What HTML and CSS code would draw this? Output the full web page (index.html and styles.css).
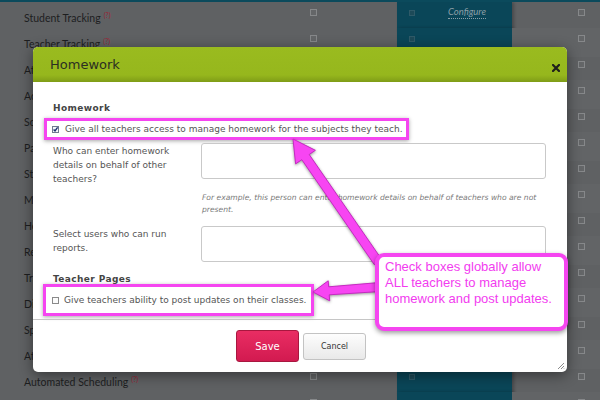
FILE: index.html
```html
<!DOCTYPE html>
<html>
<head>
<meta charset="utf-8">
<link rel="stylesheet" href="styles.css">
</head>
<body>
<div class="topbar"></div>
<div class="table">
  <div class="row"><div class="lab">Student Tracking<sup>(?)</sup></div><div class="c1"><span class="cb"></span></div><div class="teal"><span class="cb on"></span><span class="configure">Configure</span></div><div class="c3"><span class="cb"></span></div></div>
  <div class="row"><div class="lab">Teacher Tracking<sup>(?)</sup></div><div class="c1"><span class="cb"></span></div><div class="teal"><span class="cb on"></span></div><div class="c3"><span class="cb"></span></div></div>
  <div class="row"><div class="lab">Attendance<sup>(?)</sup></div><div class="c1"><span class="cb"></span></div><div class="teal"><span class="cb on"></span></div><div class="c3"><span class="cb"></span></div></div>
  <div class="row"><div class="lab">Academics<sup>(?)</sup></div><div class="c1"><span class="cb"></span></div><div class="teal"><span class="cb on"></span></div><div class="c3"><span class="cb"></span></div></div>
  <div class="row"><div class="lab">Schedules<sup>(?)</sup></div><div class="c1"><span class="cb"></span></div><div class="teal"><span class="cb on"></span></div><div class="c3"><span class="cb"></span></div></div>
  <div class="row"><div class="lab">Parent Portal<sup>(?)</sup></div><div class="c1"><span class="cb"></span></div><div class="teal"><span class="cb on"></span></div><div class="c3"><span class="cb"></span></div></div>
  <div class="row"><div class="lab">Student Portal<sup>(?)</sup></div><div class="c1"><span class="cb"></span></div><div class="teal"><span class="cb on"></span></div><div class="c3"><span class="cb"></span></div></div>
  <div class="row"><div class="lab">Messaging<sup>(?)</sup></div><div class="c1"><span class="cb"></span></div><div class="teal"><span class="cb on"></span></div><div class="c3"><span class="cb"></span></div></div>
  <div class="row"><div class="lab">Health Records<sup>(?)</sup></div><div class="c1"><span class="cb"></span></div><div class="teal"><span class="cb on"></span></div><div class="c3"><span class="cb"></span></div></div>
  <div class="row"><div class="lab">Report Cards<sup>(?)</sup></div><div class="c1"><span class="cb"></span></div><div class="teal"><span class="cb on"></span></div><div class="c3"><span class="cb"></span></div></div>
  <div class="row"><div class="lab">Transcripts<sup>(?)</sup></div><div class="c1"><span class="cb"></span></div><div class="teal"><span class="cb on"></span></div><div class="c3"><span class="cb"></span></div></div>
  <div class="row"><div class="lab">Discipline<sup>(?)</sup></div><div class="c1"><span class="cb"></span></div><div class="teal"><span class="cb on"></span></div><div class="c3"><span class="cb"></span></div></div>
  <div class="row"><div class="lab">Special Education<sup>(?)</sup></div><div class="c1"><span class="cb"></span></div><div class="teal"><span class="cb on"></span></div><div class="c3"><span class="cb"></span></div></div>
  <div class="row"><div class="lab">Athletics<sup>(?)</sup></div><div class="c1"><span class="cb"></span></div><div class="teal"><span class="cb on"></span></div><div class="c3"><span class="cb"></span></div></div>
  <div class="row"><div class="lab">Automated Scheduling<sup>(?)</sup></div><div class="c1"><span class="cb"></span></div><div class="teal"><span class="cb on"></span></div><div class="c3"><span class="cb"></span></div></div>
  <div class="row last"><div class="lab">Gradebook<sup>(?)</sup></div><div class="c1"><span class="cb"></span></div><div class="teal"><span class="cb on"></span></div><div class="c3"><span class="cb"></span></div></div>
</div>

<div class="modal">
  <div class="mhead">
    <span class="mtitle">Homework</span>
    <svg class="close" width="8" height="8" viewBox="0 0 8 8"><path d="M1 1L7 7M7 1L1 7" stroke="#1e1f1c" stroke-width="2.2" stroke-linecap="square"/></svg>
  </div>
  <div class="mbody">
    <div class="sect">Homework</div>
    <label class="hl hl1">
      <svg class="mcb" width="7" height="7" viewBox="0 0 7 7"><rect x="0.5" y="0.5" width="6" height="6" fill="#f4f6fa" stroke="#6f7a90"/><path d="M1.6 3.6L3 5L5.6 1.4" fill="none" stroke="#1c2f6e" stroke-width="1.4"/></svg>
      <span>Give all teachers access to manage homework for the subjects they teach.</span>
    </label>
    <div class="field">
      <div class="flabel">Who can enter homework details on behalf of other teachers?</div>
      <div class="ta"></div>
    </div>
    <div class="help">For example, this person can enter homework details on behalf of teachers who are not present.</div>
    <div class="field f2">
      <div class="flabel">Select users who can run reports.</div>
      <div class="ta"></div>
    </div>
    <div class="sect s2">Teacher Pages</div>
    <label class="hl hl2">
      <svg class="mcb" width="7" height="7" viewBox="0 0 7 7"><rect x="0.5" y="0.5" width="6" height="6" fill="#fbfbfb" stroke="#8a8a8a"/></svg>
      <span>Give teachers ability to post updates on their classes.</span>
    </label>
  </div>
  <div class="mfoot">
    <button class="btn save">Save</button>
    <button class="btn cancel">Cancel</button>
  </div>
  <svg class="grip" width="8" height="8" viewBox="0 0 8 8"><path d="M7 1L1 7M7 4L4 7M7 6.5L6.5 7" stroke="#8c8c8c" stroke-width="1"/></svg>
</div>

<svg class="arrows" width="600" height="400" viewBox="0 0 600 400">
  <polygon points="293,139 315.4,150.3 309.2,154.5 381.7,259.4 374.3,264.6 301.8,159.7 295.6,163.9" />
  <polygon points="313,292 329.7,300.8 329.2,294.8 380.3,291.5 379.7,282.5 328.7,286.8 328.2,280.8" />
</svg>

<div class="callout">Check boxes globally allow ALL teachers to manage homework and post updates.</div>
</body>
</html>
```

FILE: styles.css
```css
* { box-sizing: border-box; margin: 0; padding: 0; }
html, body { width: 600px; height: 400px; overflow: hidden; }
body {
  position: relative;
  background: #5f6163;
  font-family: Lato, "Open Sans", sans-serif;
}
.topbar { height: 2px; background: #0b4a5c; }

.table { height: 398px; overflow: hidden; }
.row {
  display: grid;
  grid-template-columns: 290px 107px 115px 88px;
  height: 26px;
}
.row:nth-child(even) .c3 { background: #626466; }
.lab {
  padding-left: 24px;
  font-size: 10.5px;
  line-height: 26px;
  color: #1d1e1f;
  white-space: nowrap;
}
.lab sup {
  font-size: 7px;
  color: #9c2437;
  vertical-align: 4px;
  margin-left: 3px;
}
.row.last .lab { line-height: 18px; padding-top: 2px; }
.c1 { padding: 7px 0 0 20px; }
.c3 { padding: 7px 0 0 66px; }
.teal {
  background: #0a4658;
  padding: 8px 0 0 12px;
  display: flex;
  align-items: flex-start;
  box-shadow: 2px 0 3px rgba(0,0,0,0.25);
}
.cb {
  display: block;
  width: 7px;
  height: 7px;
  border: 1px solid #86888a;
  background: #646668;
}
.cb.on {
  width: 6px;
  height: 6px;
  border-color: #2f5a68;
  background: #1d4a58;
}
.configure {
  margin-left: 33px;
  margin-top: -3px;
  font-size: 9.5px;
  font-style: italic;
  color: #8b9ea7;
  line-height: 10px;
  padding-bottom: 1px;
  border-bottom: 1px dotted #8b9ea7;
}

/* modal */
.modal {
  position: absolute;
  left: 33px;
  top: 47px;
  width: 534px;
  height: 325px;
  background: #fff;
  border-radius: 5px;
  box-shadow: 0 3px 14px rgba(0,0,0,0.45);
  font-family: "DejaVu Sans", Verdana, sans-serif;
  color: #555;
}
.mhead {
  height: 35px;
  border-radius: 5px 5px 0 0;
  background: linear-gradient(#9abb1f 0%, #96b71d 80%, #7f9c17 100%);
  display: flex;
  align-items: center;
  justify-content: space-between;
  padding: 0 7px 0 17px;
}
.mtitle { font-size: 13px; color: #2b2e22; }
.close { margin-top: 6px; }
.mbody { padding: 20px 21px 0 20px; }
.sect {
  font-size: 9px;
  font-weight: bold;
  letter-spacing: 0.4px;
  color: #444;
  line-height: 12px;
}
.hl {
  display: flex;
  align-items: center;
  border: 3px solid #f545f0;
  background: #fff;
  box-shadow: 0 1px 4px rgba(0,0,0,0.35);
  font-size: 9px;
  color: #555;
  white-space: nowrap;
  overflow: hidden;
}
.hl1 {
  margin: 4px 0 0 -9px;
  width: 365px;
  height: 22px;
  padding-left: 5px;
  gap: 6px;
}
.hl2 {
  margin: 0 0 0 -10px;
  width: 271px;
  height: 32px;
  padding-left: 6px;
  gap: 5px;
}
.field {
  display: grid;
  grid-template-columns: 148px 345px;
  margin-top: 3px;
}
.flabel {
  font-size: 9px;
  line-height: 14px;
  padding: 1px 12px 0 0;
  color: #555;
}
.ta {
  height: 36px;
  border: 1px solid #c9c9c9;
  border-radius: 3px;
  background: #fff;
}
.help {
  margin: 6px 0 0 149px;
  font-size: 7.6px;
  font-style: italic;
  line-height: 12px;
  color: #7a7a7a;
}
.f2 { margin-top: 10px; }
.s2 { margin-top: 12px; line-height: 10px; }

.mfoot {
  position: absolute;
  left: 0;
  right: 0;
  bottom: 0;
  height: 53px;
  border-top: 1px solid #c6c6c6;
  display: flex;
  justify-content: center;
  align-items: center;
  gap: 4px;
  padding: 0 0 0 2px;
}
.btn { font-family: "DejaVu Sans", Verdana, sans-serif; border-radius: 3px; }
.save {
  width: 63px;
  height: 32px;
  background: linear-gradient(#e92d63, #d21a50);
  border: 1px solid #a8173f;
  color: #fff;
  font-size: 10px;
}
.cancel {
  width: 63px;
  height: 27px;
  background: linear-gradient(#fdfdfd, #e9e9e9);
  border: 1px solid #c3c3c3;
  color: #333;
  font-size: 8px;
}
.grip { position: absolute; right: 2px; bottom: 2px; }

.arrows { position: absolute; left: 0; top: 0; }
.arrows polygon {
  fill: #f745f2;
  stroke: #c42ac0;
  stroke-width: 1;
  filter: drop-shadow(0 1px 1.5px rgba(0,0,0,0.4));
}

.callout {
  position: absolute;
  left: 375px;
  top: 253px;
  width: 193px;
  height: 78px;
  border: 4px solid #f545f0;
  border-radius: 9px;
  background: #fff;
  box-shadow: 0 2px 5px rgba(0,0,0,0.4);
  padding: 2px 4px 0 6px;
  font-family: "Liberation Sans", Arial, sans-serif;
  font-size: 13px;
  line-height: 16px;
  color: #f23cef;
}
```
